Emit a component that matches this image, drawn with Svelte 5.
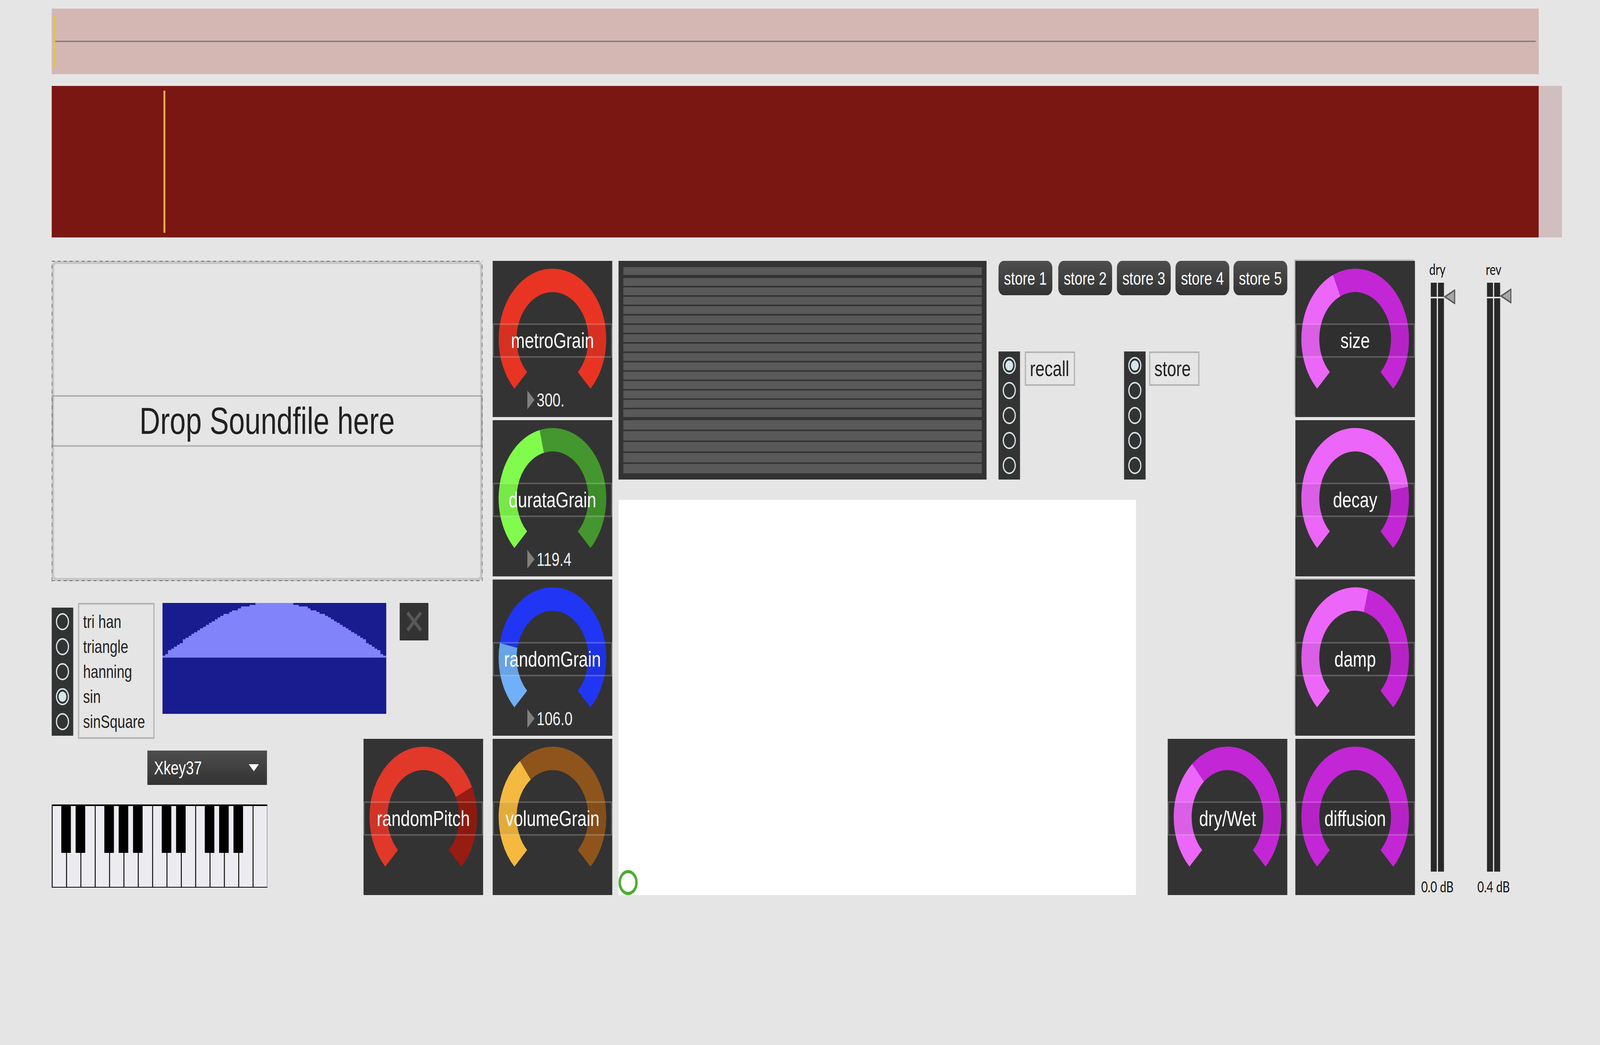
<script lang="ts">
    const rows = Array.from({ length: 21 }, (_, i) => i);
    const shapes = ["tri han", "triangle", "hanning", "sin", "sinSquare"];
    const stores = ["store 1", "store 2", "store 3", "store 4", "store 5"];
    const blackKeys = [32, 80, 176, 224, 272, 368, 416, 512, 560, 608];
    const whiteKeys = Array.from({ length: 15 }, (_, i) => i);

    const meters = [
        { label: "dry", db: "0.0 dB", handle: 17 },
        { label: "rev", db: "0.4 dB", handle: 15 },
    ];

    // the patch is laid out at 5352x2676, the window may be capped below that
    const fitX = window.innerWidth / 5352;
    const fitY = window.innerHeight / 2676;

    // polar helper, angle 0 is straight up
    function pt(a: number, r = 150) {
        const rad = (a * Math.PI) / 180;
        return `${200 + r * Math.sin(rad)} ${200 - r * Math.cos(rad)}`;
    }

    function arc(from: number, to: number) {
        const big = to - from > 180 ? 1 : 0;
        return `M ${pt(from)} A 150 150 0 ${big} 1 ${pt(to)}`;
    }

    const split = (v: number) => -135 + 270 * v;

    // sine window, drawn in blocks like the buffer display
    const wavePoints = (() => {
        const n = 77;
        const w = 749 / n;
        const q = 4.67;
        let pts = "0,140 ";
        for (let i = 0; i < n; i++) {
            const s = Math.sin((Math.PI * (i + 0.5)) / n);
            const h = Math.min(140, Math.ceil((s * 140) / q) * q);
            pts += `${i * w},${140 - h} ${(i + 1) * w},${140 - h} `;
        }
        return pts + "749,140";
    })();
</script>

{#snippet radios(count, active)}
    <div class="radios">
        {#each Array(count) as _, i}
            <div class="radio-cell">
                <span class="radio" class:on={i === active}></span>
            </div>
        {/each}
    </div>
{/snippet}

{#snippet dial(name, v, on, off, value = "", selected = false)}
    <div class="dial" class:selected>
        <svg viewBox="0 0 400 400" width="400" height="400">
            {#if v < 1}
                <path d={arc(split(v), 135)} stroke={off} />
            {/if}
            {#if v > 0}
                <path d={arc(-135, split(v))} stroke={on} />
            {/if}
        </svg>
        <div class="dial-label">{name}</div>
        {#if value}
            <div class="dial-value">
                <svg width="24" height="48" viewBox="0 0 24 48">
                    <polygon points="0,0 24,24 0,48" fill="#808080" />
                </svg>
                <span>{value}</span>
            </div>
        {/if}
    </div>
{/snippet}

<div class="page" style="transform: scale({fitX}, {fitY})">
    <div class="scrub">
        <div class="scrub-mark"></div>
        <div class="scrub-line"></div>
    </div>

    <div class="wave-row">
        <div class="wave">
            <div class="wave-cursor"></div>
        </div>
        <div class="wave-side"></div>
    </div>

    <div class="main">
        <div class="col-a">
            <div class="drop">
                <div class="drop-strip">Drop Soundfile here</div>
            </div>

            <div class="shape-row">
                <div class="shape-radios">{@render radios(5, 3)}</div>
                <div class="shape-list">
                    {#each shapes as s}
                        <div>{s}</div>
                    {/each}
                </div>
                <svg class="shape-view" width="749" height="284" viewBox="0 0 749 284" shape-rendering="crispEdges">
                    <rect width="749" height="284" fill="#181c8f" />
                    <polygon points={wavePoints} fill="#8083fa" />
                </svg>
                <div class="close">
                    <svg width="96" height="96" viewBox="0 0 96 96">
                        <path d="M26 25 L71 70 M71 25 L26 70" stroke="#595959" stroke-width="9" />
                    </svg>
                </div>
            </div>

            <div class="keys-row">
                <div class="keys-col">
                    <div class="menu">
                        <span>Xkey37</span>
                        <svg width="34" height="18" viewBox="0 0 34 18">
                            <polygon points="0,0 34,0 17,18" fill="#fff" />
                        </svg>
                    </div>
                    <div class="keyboard">
                        {#each whiteKeys as k (k)}
                            <div class="white"></div>
                        {/each}
                        {#each blackKeys as left}
                            <div class="black" style="left: {left}px"></div>
                        {/each}
                    </div>
                </div>
                {@render dial("randomPitch", 0.74, "#e1382a", "#971c11")}
            </div>
        </div>

        <div class="col-b">
            {@render dial("metroGrain", 1, "#e93423", "#8e1f14", "300.")}
            {@render dial("durataGrain", 0.449, "#81fb4c", "#43972e", "119.4")}
            {@render dial("randomGrain", 0.211, "#70b0f8", "#2136f5", "106.0")}
            {@render dial("volumeGrain", 0.362, "#f5b93f", "#8e541c")}
        </div>

        <div class="col-c">
            <div class="top-row">
                <div class="presets">
                    {#each rows as r}
                        <div class="preset" class:tall={r > 15}></div>
                    {/each}
                </div>
                <div class="store-col">
                    <div class="store-btns">
                        {#each stores as s}
                            <button class="store-btn">{s}</button>
                        {/each}
                    </div>
                    <div class="slots">
                        <div class="slot">
                            {@render radios(5, 0)}
                            <div class="slot-label">recall</div>
                        </div>
                        <div class="slot second">
                            {@render radios(5, 0)}
                            <div class="slot-label">store</div>
                        </div>
                    </div>
                </div>
            </div>
            <div class="bottom-row">
                <div class="canvas">
                    <div class="ring"></div>
                </div>
                {@render dial("dry/Wet", 0.348, "#ec66f9", "#c326d5")}
            </div>
        </div>

        <div class="col-b col-d">
            {@render dial("size", 0.41, "#ec66f9", "#c326d5", "", true)}
            {@render dial("decay", 0.798, "#ec66f9", "#c326d5")}
            {@render dial("damp", 0.552, "#ec66f9", "#c326d5", "", true)}
            {@render dial("diffusion", 0, "#ec66f9", "#c326d5")}
        </div>

        <div class="meters">
            {#each meters as m}
                <div class="meter">
                    <div class="meter-label">{m.label}</div>
                    <div class="bars">
                        <div class="bar"></div>
                        <div class="bar"></div>
                        <svg class="handle" style="top: {m.handle}px" width="38" height="38" viewBox="0 0 38 38">
                            <polygon points="3,19 36,2 36,36" fill="#a6a6a6" stroke="#595959" stroke-width="4" />
                        </svg>
                    </div>
                    <div class="meter-db">{m.db}</div>
                </div>
            {/each}
        </div>
    </div>
</div>

<style>
    :global(body) {
        background: #e5e5e5;
        overflow: hidden;
    }

    .page {
        width: 5352px;
        height: 2676px;
        box-sizing: border-box;
        padding: 22px 0 0 173px;
        background: #e5e5e5;
        font-family: "Liberation Sans", Arial, sans-serif;
        color: #212121;
        overflow: hidden;
        transform-origin: 0 0;
    }

    .scrub {
        width: 4974px;
        height: 168px;
        box-sizing: border-box;
        padding: 0 10px 0 8px;
        display: flex;
        align-items: center;
        background: #d4b7b3;
    }

    .scrub-mark {
        width: 4px;
        height: 134px;
        background: #e0c93b;
    }

    .scrub-line {
        flex: 1;
        height: 4px;
        background: #868686;
    }

    .wave-row {
        display: flex;
        height: 388px;
        margin-top: 30px;
    }

    .wave {
        width: 4974px;
        box-sizing: border-box;
        padding: 12px 0 12px 374px;
        background: #7b1712;
    }

    .wave-cursor {
        width: 4px;
        height: 100%;
        background: #f7bd52;
        border: solid #d98f2e;
        border-width: 0 1px;
    }

    .wave-side {
        width: 78px;
        background: #d1bfbf;
    }

    .main {
        display: flex;
        margin-top: 60px;
    }

    .col-a {
        width: 1443px;
    }

    .drop {
        position: relative;
        width: 1441px;
        height: 820px;
        box-sizing: border-box;
        border: 8px solid #c6c6c6;
        border-radius: 16px;
        display: flex;
        align-items: center;
    }

    /* dashed selection frame sits on top of the rounded border */
    .drop::after {
        content: "";
        position: absolute;
        inset: -8px;
        pointer-events: none;
        background-image:
            repeating-linear-gradient(90deg, #666 0 10px, transparent 10px 20px),
            repeating-linear-gradient(90deg, #666 0 10px, transparent 10px 20px),
            repeating-linear-gradient(0deg, #666 0 10px, transparent 10px 20px),
            repeating-linear-gradient(0deg, #666 0 10px, transparent 10px 20px);
        background-size: 100% 2px, 100% 2px, 2px 100%, 2px 100%;
        background-position: 0 0, 0 100%, 0 0, 100% 0;
        background-repeat: no-repeat;
    }

    .drop-strip {
        flex: 1;
        margin: 0 -8px;
        height: 132px;
        box-sizing: border-box;
        border: 4px solid rgba(130, 130, 130, 0.5);
        display: flex;
        align-items: center;
        justify-content: center;
        font-size: 96px;
    }

    .shape-row {
        display: flex;
        align-items: flex-start;
        height: 348px;
        margin-top: 56px;
    }

    .shape-radios {
        margin-top: 12px;
    }

    .radios {
        width: 72px;
        box-sizing: border-box;
        padding: 4px 0;
        background: #333;
    }

    .radio-cell {
        height: 64px;
        display: flex;
        align-items: center;
        justify-content: center;
    }

    .radio {
        width: 44px;
        height: 44px;
        box-sizing: border-box;
        border: 4px solid #d5e6ea;
        border-radius: 50%;
    }

    .radio.on {
        padding: 5px;
        background: #d5e6ea content-box;
    }

    .shape-list {
        width: 256px;
        height: 348px;
        box-sizing: border-box;
        margin: 0 26px 0 16px;
        padding: 12px 0 0 13px;
        border: 4px solid #b3b3b3;
        font-size: 46px;
        line-height: 64px;
    }

    .shape-view {
        display: block;
    }

    .close {
        width: 96px;
        height: 96px;
        margin-left: 45px;
        background: #333;
    }

    .close svg {
        display: block;
    }

    .keys-row {
        display: flex;
        justify-content: space-between;
    }

    .keys-col {
        width: 721px;
        padding-top: 30px;
    }

    .menu {
        width: 400px;
        height: 88px;
        box-sizing: border-box;
        margin-left: 320px;
        padding: 0 27px 0 22px;
        display: flex;
        align-items: center;
        justify-content: space-between;
        background: linear-gradient(#4d4d4d, #333);
        color: #fff;
        font-size: 48px;
    }

    .keyboard {
        position: relative;
        display: flex;
        height: 213px;
        box-sizing: border-box;
        margin-top: 50px;
        border-top: 4px solid #000;
        border-bottom: 2px solid #000;
        border-right: 1px solid #000;
    }

    .white {
        flex: 1;
        background: #ebebf0;
        border-left: 3px solid #000;
    }

    .black {
        position: absolute;
        top: 0;
        width: 32px;
        height: 120px;
        background: #000;
    }

    .col-b {
        display: flex;
        flex-direction: column;
        gap: 8px;
        margin-left: 32px;
    }

    .col-d {
        margin-left: 27px;
    }

    .dial {
        position: relative;
        width: 400px;
        height: 400px;
        background: #333;
        flex: none;
    }

    .dial.selected {
        box-shadow: -4px -4px 0 #c0c0c0;
    }

    .dial > svg {
        display: block;
    }

    .dial path {
        fill: none;
        stroke-width: 60;
    }

    .dial-label {
        position: absolute;
        left: 0;
        right: 0;
        top: 160px;
        height: 88px;
        box-sizing: border-box;
        border: 4px solid rgba(255, 255, 255, 0.22);
        background: rgba(0, 0, 0, 0.07);
        display: flex;
        align-items: center;
        justify-content: center;
        color: #fff;
        font-size: 55.5px;
    }

    .dial-value {
        position: absolute;
        left: 116px;
        top: 332px;
        height: 48px;
        display: flex;
        align-items: center;
        gap: 7px;
        color: #f2f2f2;
        font-size: 48px;
    }

    .col-c {
        width: 2237px;
        margin-left: 21px;
    }

    .top-row {
        display: flex;
        gap: 40px;
    }

    .presets {
        width: 1231px;
        height: 560px;
        box-sizing: border-box;
        padding: 16px;
        display: flex;
        flex-direction: column;
        gap: 4px;
        background: #333;
    }

    .preset {
        height: 20px;
        background: #595959;
    }

    .preset:first-child {
        margin-bottom: 4px;
    }

    .preset.tall {
        height: 24px;
    }

    .preset:nth-child(17) {
        margin-top: 4px;
    }

    .store-col {
        width: 966px;
    }

    .store-btns {
        display: flex;
    }

    .store-btn {
        width: 180px;
        height: 88px;
        margin: 0 0 0 16px;
        padding: 0;
        border: none;
        border-radius: 18px;
        background: linear-gradient(#4e4e4e, #333);
        color: #fff;
        font: 47px "Liberation Sans", Arial, sans-serif;
    }

    .store-btn:first-child {
        margin-left: 0;
    }

    .store-btn:nth-child(2) {
        margin-left: 20px;
    }

    .store-btn:last-child {
        margin-left: 14px;
    }

    .slots {
        display: flex;
        margin-top: 144px;
    }

    .slot {
        display: flex;
        align-items: flex-start;
        gap: 16px;
        width: 420px;
    }

    .slot.second {
        gap: 12px;
    }

    .slot-label {
        width: 168px;
        height: 88px;
        box-sizing: border-box;
        padding-left: 13px;
        border: 4px solid #b3b3b3;
        font-size: 55px;
        line-height: 80px;
    }

    .bottom-row {
        display: flex;
        align-items: flex-end;
        justify-content: space-between;
        margin-top: 52px;
    }

    .canvas {
        width: 1731px;
        height: 1012px;
        display: flex;
        align-items: flex-end;
        background: #fff;
    }

    .ring {
        width: 64px;
        height: 64px;
        box-sizing: border-box;
        border: 8px solid #4dab30;
        border-radius: 50%;
    }

    .meters {
        display: flex;
        gap: 144px;
        margin-left: 53px;
    }

    .meter {
        width: 44px;
        display: flex;
        flex-direction: column;
        align-items: center;
        font-family: Lato, sans-serif;
        font-size: 38px;
        color: #111;
    }

    .meter-label {
        height: 42px;
        line-height: 42px;
        margin-bottom: 14px;
    }

    .bars {
        position: relative;
        display: flex;
        gap: 4px;
        height: 1508px;
    }

    .bar {
        width: 20px;
        background: #282828;
    }

    /* notch of the slider handle */
    .bars::before {
        content: "";
        position: absolute;
        left: 0;
        right: 0;
        top: 36px;
        height: 4px;
        background: #e5e5e5;
    }

    .handle {
        position: absolute;
        left: 44px;
    }

    .meter-db {
        height: 40px;
        line-height: 40px;
        margin-top: 18px;
        white-space: nowrap;
    }
</style>
